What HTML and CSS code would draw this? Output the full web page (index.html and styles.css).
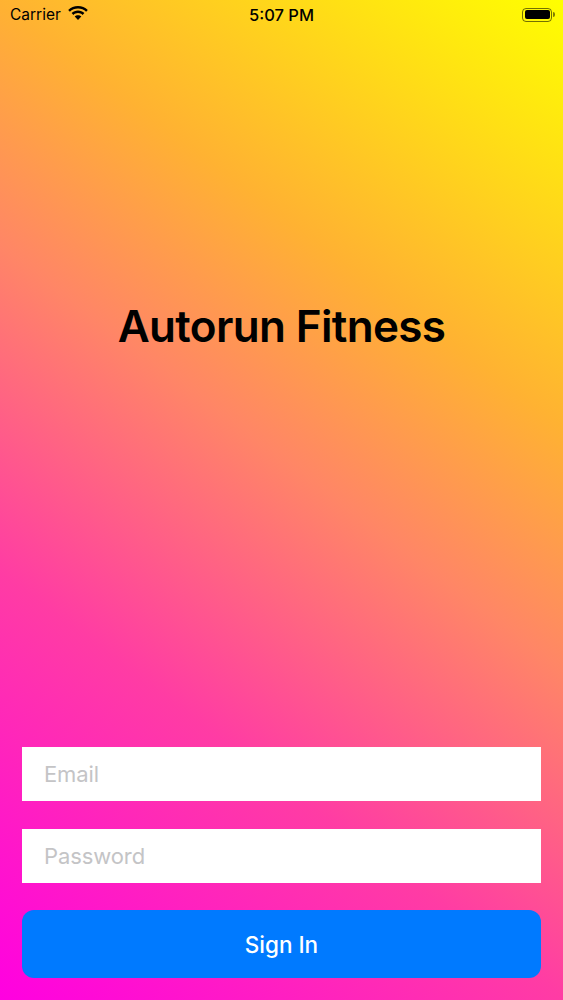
FILE: index.html
```html
<!DOCTYPE html>
<html lang="en">
<head>
<meta charset="utf-8">
<title>Autorun Fitness</title>
<link rel="stylesheet" href="styles.css">
</head>
<body>
<main class="screen">
  <header class="status">
    <div class="status-left">
      <span>Carrier</span>
      <svg class="wifi" viewBox="0 0 20 14" aria-hidden="true">
        <path d="M10 0C6.200 0 2.800 1.500.2 3.900l1.700 1.800C4 3.700 6.900 2.500 10 2.500s6 1.200 8.100 3.200l1.700-1.800C17.200 1.500 13.800 0 10 0z"/>
        <path d="M10 4.600c-2.500 0-4.700 1-6.400 2.500l1.800 1.800C6.600 7.800 8.200 7.100 10 7.100s3.400.7 4.600 1.800l1.800-1.800C14.700 5.600 12.500 4.600 10 4.600z"/>
        <path d="M10 9.200c-1.300 0-2.500.5-3.300 1.300L10 14l3.300-3.500c-.8-.8-2-1.300-3.300-1.300z"/>
      </svg>
    </div>
    <div class="status-time">5:07 PM</div>
    <div class="status-right">
      <div class="battery"><div class="battery-fill"></div></div>
      <div class="battery-cap"></div>
    </div>
  </header>
  <h1 class="title">Autorun Fitness</h1>
  <form class="form">
    <div class="field">Email</div>
    <div class="field">Password</div>
    <div class="signin">Sign In</div>
  </form>
</main>
</body>
</html>
```
FILE: styles.css
```css
* { box-sizing: border-box; }
html, body { margin: 0; padding: 0; }
body { font-family: Inter, "Liberation Sans", sans-serif; color: #000; }
.screen {
  width: 563px;
  height: 1000px;
  display: flex;
  flex-direction: column;
  background: linear-gradient(217deg, #ffff00 0%, #ffb232 30%, #ff8666 47%, #ff3ca4 70%, #ff00e1 100%);
  overflow: hidden;
}
.status {
  height: 30px;
  flex: none;
  display: grid;
  grid-template-columns: 1fr auto 1fr;
  align-items: center;
  padding: 0 8px 1px;
  font-size: 15.500px;
}
.status-left { display: flex; align-items: center; gap: 7px; padding-left: 2px; }
.wifi { width: 20px; height: 14px; fill: #000; margin-top: -3px; }
.status-time { font-size: 16.500px; font-weight: 500; }
.status-right { display: flex; justify-content: flex-end; align-items: center; }
.battery {
  width: 30px;
  height: 14px;
  border: 1px solid rgba(0,0,0,.55);
  border-radius: 4px;
  padding: 1.500px;
}
.battery-fill { width: 100%; height: 100%; background: #000; border-radius: 2px; }
.battery-cap { width: 2px; height: 5px; margin-left: 1px; background: rgba(0,0,0,.5); border-radius: 0 2px 2px 0; }
.title {
  margin: 268px 0 0;
  height: 56px;
  line-height: 56px;
  text-align: center;
  font-size: 44px;
  font-weight: 600;
  letter-spacing: -0.650px;
}
.form {
  margin-top: auto;
  padding: 0 22px 22px;
  display: flex;
  flex-direction: column;
}
.field {
  height: 54px;
  background: #fff;
  color: #c4c4c6;
  font-size: 22px;
  letter-spacing: -0.100px;
  line-height: 55px;
  padding-left: 22px;
  margin-bottom: 27.500px;
}
.signin {
  height: 68px;
  background: #007aff;
  border-radius: 12px;
  color: #fff;
  font-size: 22.500px;
  font-weight: 500;
  line-height: 69px;
  text-align: center;
}
```
